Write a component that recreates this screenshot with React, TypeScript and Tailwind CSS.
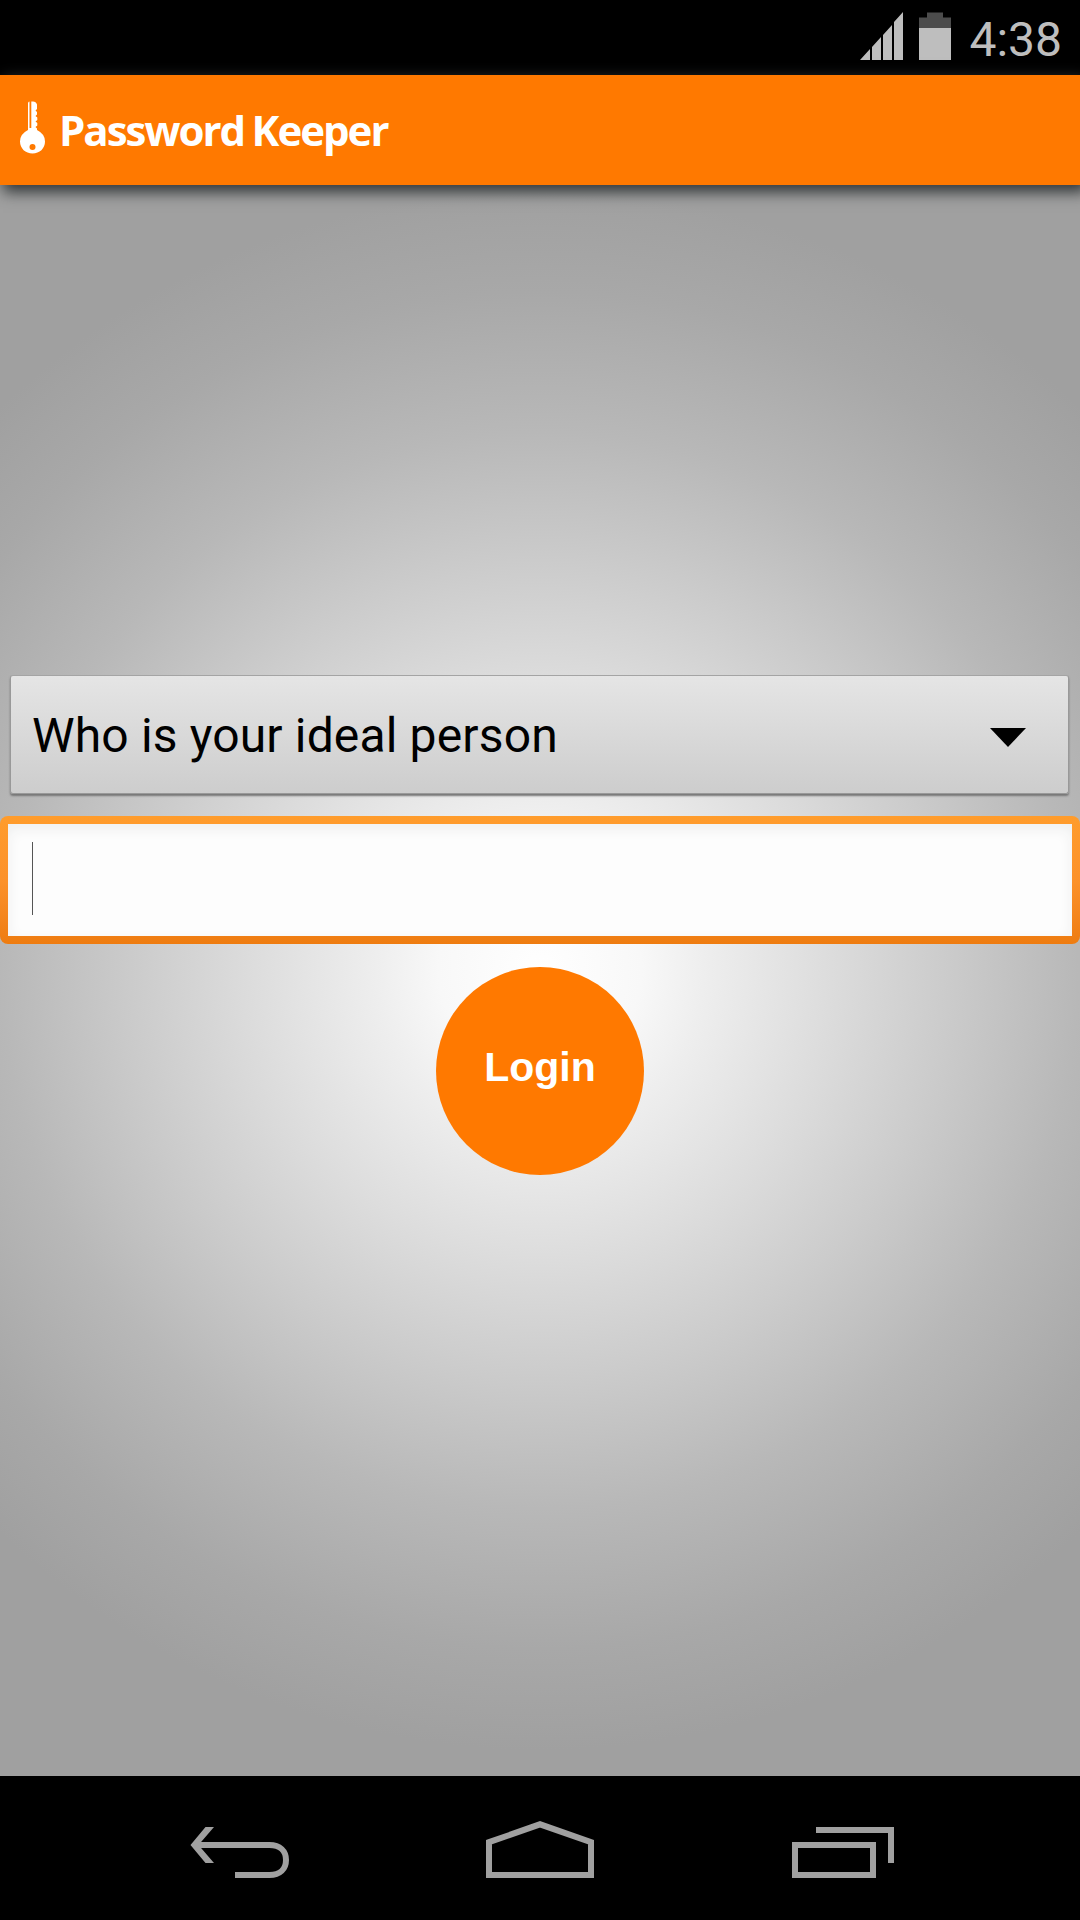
import { useState } from "react";

const questions = ["Who is your ideal person"];

const StatusBar = () => {
  return (
    <div className="flex h-[75px] items-start justify-end bg-black pr-[18px] text-[#bebebe]">
      <svg className="mt-3 h-12 w-[43px]" viewBox="0 0 43 48" fill="currentColor">
        <path d="M0 48L10 37V48ZM12 48V35L21 25V48ZM23 48V23L32 13V48ZM34 48V10L43 0V48Z" />
      </svg>
      <svg className="mt-3 ml-4 h-12 w-8" viewBox="0 0 32 48">
        <path d="M0 5.5H8V0.5H24V5.5H32V16H0Z" fill="#4c4c4c" />
        <path d="M0 16H32V48H0Z" fill="currentColor" />
      </svg>
      <span className="mt-3 ml-[18px] font-[Roboto,sans-serif] text-[48px] leading-[56px]">
        4:38
      </span>
    </div>
  );
};

const Header = () => {
  return (
    <header className="relative flex h-[110px] items-start bg-[#ff7900] pl-5 text-white shadow-[5px_5px_14px_2px_#303536]">
      <svg className="mt-[26px] h-[53px] w-[25px]" viewBox="0 0 25 53">
        <path
          fill="currentColor"
          d="M8 2.5Q8 .5 9.5 .5V27H11.3V.5H13Q16 .5 17 3.5V8L15.5 9.5L17 11V13.5L15.5 15L17.3 16.5V19L15.5 20.5L17.3 22V24.5L15.5 26L17 27.5V29Q25 33 25 40.5C25 47.5 19.5 52.5 12.5 52.5S0 47.5 0 40.5Q0 33 8 29Z"
        />
        <circle cx="12.5" cy="46" r="3" fill="#ff7900" />
      </svg>
      <h1 className="mt-[26px] ml-[14px] font-['Open_Sans',sans-serif] text-[42px] leading-[57px] font-bold tracking-[-2px] [word-spacing:-1.5px] whitespace-nowrap">
        Password Keeper
      </h1>
    </header>
  );
};

const NavBar = () => {
  return (
    <nav className="flex h-36 items-start bg-black pt-[45px] pl-[190px] text-[#a0a0a0]">
      <svg className="h-[57px] w-[99px]" viewBox="0 0 99 57" fill="none" stroke="currentColor" strokeWidth="6">
        <path d="M7 24H79.5C90 24 96 30 96 39S90 54 79.5 54H45" />
        <path d="M15.5 6H24L8.5 24L24 42H15.5L.5 24Z" fill="currentColor" stroke="none" />
      </svg>
      <svg className="ml-[197px] h-[57px] w-[108px]" viewBox="0 0 108 57" fill="none" stroke="currentColor" strokeWidth="6">
        <path d="M3 21.2L54 3.3L105 21.2V54H3Z" />
      </svg>
      <svg className="ml-[198px] h-[57px] w-[102px]" viewBox="0 0 102 57" fill="none" stroke="currentColor" strokeWidth="6">
        <path d="M3 24H81V54H3Z" />
        <path d="M24 9H99V42" />
      </svg>
    </nav>
  );
};

const App = () => {
  const [question] = useState(questions[0]);

  return (
    <div className="flex h-[1920px] w-[1080px] flex-col overflow-hidden bg-black">
      <StatusBar />
      <Header />

      <main className="flex flex-1 flex-col items-center bg-[radial-gradient(circle_780px_at_540px_785px,#ffffff_0%,#f8f8f8_13%,#eeeeee_21%,#dddddd_36.5%,#cbcbcb_52.5%,#b8b8b8_69%,#a8a8a8_87%,#a0a0a0_100%)] pt-[490px]">
        <button className="mr-px flex h-[119px] w-[1059px] items-center justify-between rounded-[3px] border border-t-[#a4a4a4] border-r-[#999] border-b-[#999] border-l-[#999] bg-linear-to-b from-[#e5e5e5] to-[#cdcdcd] pr-[42px] pl-[21px] shadow-[0_2px_2px_#777]">
          <span className="mt-0.5 font-[Roboto,sans-serif] text-[48px] leading-[56px] tracking-[0.15px] whitespace-nowrap text-black">
            {question}
          </span>
          <svg className="mt-1.5 h-[19px] w-9" viewBox="0 0 36 19">
            <path d="M0 0H36L18 19Z" />
          </svg>
        </button>

        <div className="mt-[22px] h-32 w-full rounded-lg bg-linear-to-b from-[#ff9c2c] via-[#fc922a] to-[#ee7c10] p-2">
          <div className="flex h-full items-start bg-[#fdfdfd] pt-[18px] pl-6 shadow-[inset_0_5px_14px_#eeefef]">
            <span className="h-[73px] w-px bg-[#555]" />
          </div>
        </div>

        <button className="mt-[23px] flex h-52 w-52 items-center justify-center rounded-full bg-[#ff7900] pb-1.5 font-['Liberation_Sans',Arial,sans-serif] text-[41px] font-bold text-white">
          Login
        </button>
      </main>

      <NavBar />
    </div>
  );
};

export default App;
